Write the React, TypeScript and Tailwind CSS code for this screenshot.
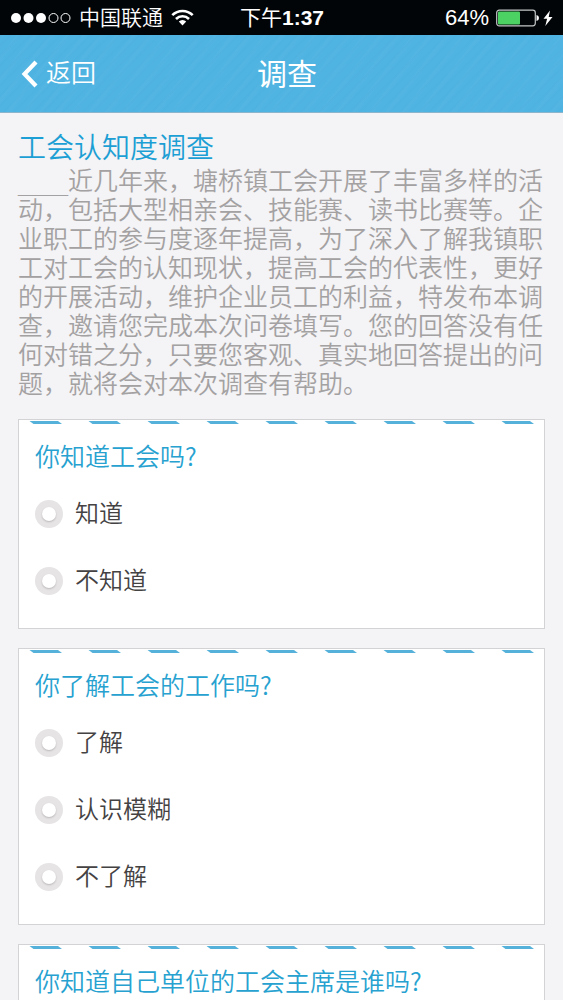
import React, { useState } from "react";

type Question = { id: string; title: string; options: string[] };

const questions: Question[] = [
  { id: "know", title: "你知道工会吗?", options: ["知道", "不知道"] },
  { id: "work", title: "你了解工会的工作吗?", options: ["了解", "认识模糊", "不了解"] },
  { id: "chair", title: "你知道自己单位的工会主席是谁吗?", options: [] },
];

function StatusBar() {
  return (
    <div className="grid h-[35px] grid-cols-[1fr_auto_1fr] items-center bg-[#020507] pr-2.5 pl-[11px] text-[21px] text-white">
      <div className="flex items-center gap-2">
        <svg width="60" height="12" viewBox="0 0 60 12" aria-hidden="true">
          <circle cx="5" cy="6" r="5" fill="#fff" />
          <circle cx="17.5" cy="6" r="5" fill="#fff" />
          <circle cx="30" cy="6" r="5" fill="#fff" />
          <circle cx="42.5" cy="6" r="4.5" fill="none" stroke="#fff" />
          <circle cx="54.5" cy="6" r="4.5" fill="none" stroke="#fff" />
        </svg>
        <span className="font-[350]">中国联通</span>
        <svg width="23" height="17" viewBox="0 0 23 17" fill="none" stroke="#fff" strokeWidth="2.6" aria-hidden="true">
          <path d="M1.3 6.2a14.5 14.5 0 0 1 20.4 0" />
          <path d="M5 10a9.2 9.2 0 0 1 13 0" />
          <path d="M7.8 12.6a5.3 5.3 0 0 1 7.4 0L11.5 16.6z" fill="#fff" stroke="none" />
        </svg>
      </div>
      <span>
        下午<span className="font-bold">1:37</span>
      </span>
      <div className="flex items-center justify-end gap-[7px]">
        <span className="text-[22px]">64%</span>
        <svg width="57" height="18" viewBox="0 0 57 18" aria-hidden="true">
          <rect x="0.7" y="1.2" width="38.6" height="15.6" rx="2.5" fill="none" stroke="#c4c7c8" strokeWidth="1.2" />
          <rect x="2" y="2.5" width="22" height="13" rx="1" fill="#4cd263" />
          <path d="M40.5 6q2.5.6 2.5 3t-2.5 3z" fill="#fff" />
          <path d="M54 1.5l-6.5 8.3h3.6L49.3 17l7.2-9h-3.8z" fill="#fff" />
        </svg>
      </div>
    </div>
  );
}

function Header() {
  return (
    <header className="grid h-[78px] grid-cols-[1fr_auto_1fr] items-center border-b border-[#8cb4ca] bg-[#50b4e2] bg-[repeating-linear-gradient(135deg,rgba(20,100,160,0.03)_0px,transparent_3px,transparent_7px),repeating-linear-gradient(128deg,rgba(255,255,255,0.02)_0px,transparent_5px,transparent_13px)] pr-2.5 pl-[21px] text-white">
      <button type="button" className="flex items-center gap-2 justify-self-start text-[25px] font-[350]">
        <svg width="17" height="28" viewBox="0 0 17 28" fill="none" stroke="#fff" strokeWidth="4.2" aria-hidden="true">
          <path d="M15 2L3.5 14 15 26" />
        </svg>
        返回
      </button>
      <h1 className="pt-0.5 text-3xl font-normal">调查</h1>
    </header>
  );
}

function Stripes({ id }: { id: string }) {
  return (
    <svg className="block w-full" height="5" aria-hidden="true">
      <defs>
        <pattern id={id} width="59" height="5" patternUnits="userSpaceOnUse">
          <path d="M10.5 1H39l4 3H14.5z" fill="#56b1da" />
        </pattern>
      </defs>
      <rect width="100%" height="5" fill={`url(#${id})`} />
    </svg>
  );
}

function QuestionCard({ question }: { question: Question }) {
  const [choice, setChoice] = useState<string | null>(null);
  return (
    <fieldset className="border border-[#d3d2d4] bg-white" aria-labelledby={`${question.id}-title`}>
      <Stripes id={`${question.id}-stripes`} />
      <div className="px-4 py-3.5">
        <h3
          id={`${question.id}-title`}
          className="font-['Noto_Sans_CJK_SC',sans-serif] text-[25px] leading-8 font-[350] text-[#27a2d0]"
        >
          {question.title}
        </h3>
        <div className="pt-[9px]">
          {question.options.map((option) => (
            <label key={option} className="flex h-[67px] items-center gap-3 text-2xl font-[350] text-[#444243]">
              <input
                type="radio"
                name={question.id}
                checked={choice === option}
                onChange={() => setChoice(option)}
                className="grid size-7 shrink-0 appearance-none place-items-center rounded-full bg-[#e6e4e5] before:size-[14px] before:rounded-full before:bg-white before:shadow-[0_1px_2px_rgba(0,0,0,0.2)] checked:before:bg-[#56b1da]"
              />
              {option}
            </label>
          ))}
        </div>
      </div>
    </fieldset>
  );
}

export default function App() {
  return (
    <div
      lang="zh-CN"
      className="h-screen overflow-hidden bg-[#f4f3f5] font-['Liberation_Sans','Noto_Sans_CJK_SC',sans-serif]"
    >
      <StatusBar />
      <Header />
      <main className="px-[18px] pt-[18px]">
        <h2 className="text-[28px] leading-9 font-[350] text-[#1c9fd4]">工会认知度调查</h2>
        <p className="text-[25px] leading-[29px] font-[350] text-[#a3a1a2]">
          <span className="font-['DejaVu_Sans']">____</span>
          近几年来，塘桥镇工会开展了丰富多样的活动，包括大型相亲会、技能赛、读书比赛等。企业职工的参与度逐年提高，为了深入了解我镇职工对工会的认知现状，提高工会的代表性，更好的开展活动，维护企业员工的利益，特发布本调查，邀请您完成本次问卷填写。您的回答没有任何对错之分，只要您客观、真实地回答提出的问题，就将会对本次调查有帮助。
        </p>
        <form className="flex flex-col gap-[19px] pt-5">
          {questions.map((question) => (
            <QuestionCard key={question.id} question={question} />
          ))}
        </form>
      </main>
    </div>
  );
}
